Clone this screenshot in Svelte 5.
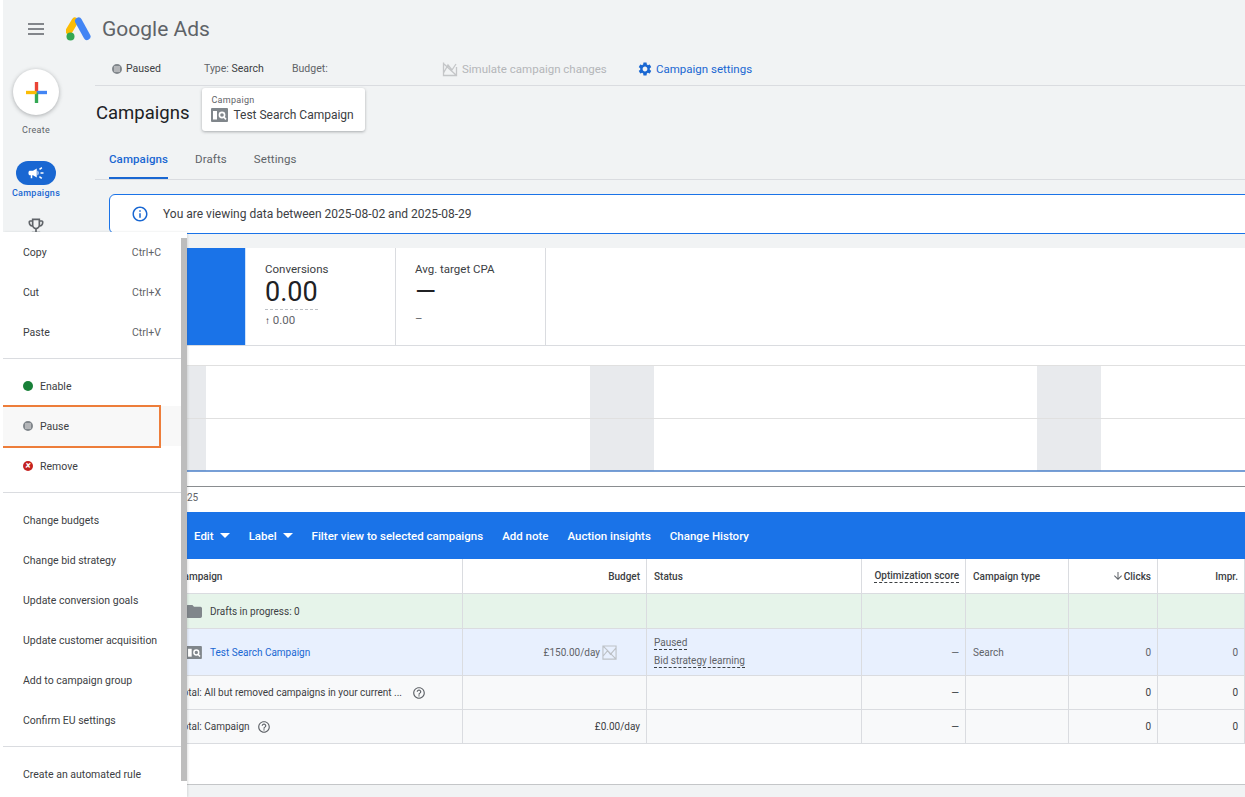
<script>
  const menuSections = [
    [{ label: 'Copy', key: 'Ctrl+C' }, { label: 'Cut', key: 'Ctrl+X' }, { label: 'Paste', key: 'Ctrl+V' }],
    [{ label: 'Enable', dot: 'enable' }, { label: 'Pause', dot: 'pause' }, { label: 'Remove', dot: 'remove' }],
    [{ label: 'Change budgets' }, { label: 'Change bid strategy' }, { label: 'Update conversion goals' }, { label: 'Update customer acquisition' }, { label: 'Add to campaign group' }, { label: 'Confirm EU settings' }],
    [{ label: 'Create an automated rule' }]
  ];
</script>

<div class="page">
  <header class="topbar">
    <svg class="burger" viewBox="0 0 16 12"><path d="M0 1h16M0 6h16M0 11h16" stroke="#5f6368" stroke-width="1.6" /></svg>
    <svg class="logo" viewBox="0 0 25 24">
      <path d="M9 4 L3 14" stroke="#fbbc04" stroke-width="7" stroke-linecap="round" />
      <path d="M12.5 4 L21 19.5" stroke="#4285f4" stroke-width="7" stroke-linecap="round" />
      <circle cx="4.5" cy="19.5" r="4" fill="#34a853" />
    </svg>
    <span class="brand">Google Ads</span>
  </header>

  <div class="body">
    <nav class="side">
      <div class="create">
        <svg viewBox="0 0 20 20" width="21" height="21">
          <rect x="8.4" y="0" width="3.2" height="10" fill="#ea4335" />
          <rect x="10" y="8.4" width="10" height="3.2" fill="#4285f4" />
          <rect x="8.4" y="10" width="3.2" height="10" fill="#34a853" />
          <rect x="0" y="8.4" width="10" height="3.2" fill="#fbbc04" />
        </svg>
      </div>
      <span class="create-label">Create</span>
      <div class="pill">
        <svg viewBox="0 0 24 24" width="18" height="18"><path fill="#fff" d="M18 11v2h4v-2h-4zm-2 6.61c.96.71 2.21 1.65 3.2 2.39.4-.53.8-1.07 1.2-1.6-.99-.74-2.24-1.68-3.2-2.4-.4.54-.8 1.08-1.2 1.61zM20.4 5.6c-.4-.53-.8-1.07-1.2-1.6-.99.74-2.24 1.68-3.2 2.4.4.53.8 1.07 1.2 1.6.96-.72 2.21-1.65 3.2-2.4zM4 9c-1.1 0-2 .9-2 2v2c0 1.1.9 2 2 2h1v4h2v-4h1l5 3V6L8 9H4zm11.5 3c0-1.33-.58-2.53-1.5-3.35v6.69c.92-.81 1.5-2.01 1.5-3.34z" /></svg>
      </div>
      <span class="pill-label">Campaigns</span>
      <svg class="trophy" viewBox="0 0 24 24" width="20" height="20"><path fill="#5f6368" d="M19 5h-2V3H7v2H5c-1.1 0-2 .9-2 2v1c0 2.55 1.92 4.63 4.39 4.94.63 1.5 1.98 2.63 3.61 2.96V19H7v2h10v-2h-4v-3.1c1.63-.33 2.98-1.46 3.61-2.96C19.08 12.63 21 10.55 21 8V7c0-1.1-.9-2-2-2zM5 8V7h2v3.82C5.84 10.4 5 9.3 5 8zm7 6c-1.65 0-3-1.35-3-3V5h6v6c0 1.65-1.35 3-3 3zm7-6c0 1.3-.84 2.4-2 2.82V7h2v1z" /></svg>
    </nav>

    <main class="main">
      <div class="status-row">
        <span class="st-paused"><i class="dot pause small"></i>Paused</span>
        <span class="st-type"><em>Type:</em> Search</span>
        <span class="st-budget"><em>Budget:</em></span>
        <span class="st-sim">
          <svg viewBox="0 0 16 16" width="16" height="16"><path d="M1.5 1.5v13h13V6M1.5 12 6 4l4 5 4-6M2 3l12 11" fill="none" stroke="#c4c6c8" stroke-width="1.3" /></svg>
          Simulate campaign changes
        </span>
        <span class="st-set">
          <svg viewBox="0 0 24 24" width="16" height="16"><path fill="#1967d2" fill-rule="evenodd" d="M19.14 12.94c.04-.3.06-.61.06-.94 0-.32-.02-.64-.07-.94l2.03-1.58c.18-.14.23-.41.12-.61l-1.92-3.32c-.12-.22-.37-.29-.59-.22l-2.39.96c-.5-.38-1.03-.7-1.62-.94l-.36-2.54c-.04-.24-.24-.41-.48-.41h-3.84c-.24 0-.43.17-.47.41l-.36 2.54c-.59.24-1.13.57-1.62.94l-2.39-.96c-.22-.08-.47 0-.59.22L2.74 8.87c-.12.21-.08.47.12.61l2.03 1.58c-.05.3-.09.63-.09.94s.02.64.07.94l-2.03 1.58c-.18.14-.23.41-.12.61l1.92 3.32c.12.22.37.29.59.22l2.39-.96c.5.38 1.03.7 1.62.94l.36 2.54c.05.24.24.41.48.41h3.84c.24 0 .44-.17.47-.41l.36-2.54c.59-.24 1.13-.56 1.62-.94l2.39.96c.22.08.47 0 .59-.22l1.92-3.32c.12-.22.07-.47-.12-.61l-2.01-1.58zM12 15.6c-1.98 0-3.6-1.62-3.6-3.6s1.62-3.6 3.6-3.6 3.6 1.62 3.6 3.6-1.62 3.6-3.6 3.6z" /></svg>
          Campaign settings
        </span>
      </div>

      <div class="title-row">
        <h1>Campaigns</h1>
        <div class="ccard">
          <span class="ccard-cap">Campaign</span>
          <span class="ccard-name">
            <svg viewBox="0 0 17 14" width="17" height="14"><use href="#camp-icon" /></svg>
            Test Search Campaign
          </span>
        </div>
      </div>

      <div class="tabs">
        <span class="tab active">Campaigns</span>
        <span class="tab">Drafts</span>
        <span class="tab">Settings</span>
      </div>

      <div class="content">
        <div class="banner">
          <svg viewBox="0 0 24 24" width="18" height="18"><path fill="#1967d2" d="M11 7h2v2h-2zm0 4h2v6h-2zm1-9C6.48 2 2 6.48 2 12s4.48 10 10 10 10-4.48 10-10S17.52 2 12 2zm0 18c-4.41 0-8-3.59-8-8s3.59-8 8-8 8 3.59 8 8-3.59 8-8 8z" /></svg>
          <span>You are viewing data between 2025-08-02 and 2025-08-29</span>
        </div>

        <section class="scores">
          <div class="score-blue"></div>
          <div class="score">
            <span class="s-name">Conversions</span>
            <span class="s-val dashed">0.00</span>
            <span class="s-sub"><b>↑</b> 0.00</span>
          </div>
          <div class="score">
            <span class="s-name">Avg. target CPA</span>
            <span class="s-val">—</span>
            <span class="s-sub">–</span>
          </div>
        </section>

        <section class="chart">
          <svg viewBox="0 0 1136 166" width="1136" height="166">
            <rect x="78" y="19" width="19" height="106" fill="#e8eaed" />
            <rect x="481" y="19" width="64" height="106" fill="#e8eaed" />
            <rect x="928" y="19" width="64" height="106" fill="#e8eaed" />
            <path d="M0 19.5h1136M0 72.5h1136" stroke="#e0e0e0" />
            <path d="M0 125h1136" stroke="#4a7fc8" stroke-width="1.5" />
            <path d="M0 140.5h1136" stroke="#8a8d90" />
            <text x="78" y="155" class="axis">25</text>
          </svg>
        </section>

        <div class="toolbar">
          <span class="t-drop">Edit <i></i></span>
          <span class="t-drop">Label <i></i></span>
          <span>Filter view to selected campaigns</span>
          <span>Add note</span>
          <span>Auction insights</span>
          <span>Change History</span>
        </div>

        <div class="table">
          <div class="row head">
            <div class="c first">Campaign</div>
            <div class="c num">Budget</div>
            <div class="c">Status</div>
            <div class="c num"><span class="dash-u">Optimization score</span></div>
            <div class="c">Campaign type</div>
            <div class="c num">
              <svg viewBox="0 0 24 24" width="12" height="12"><path fill="#5f6368" d="M20 12l-1.41-1.41L13 16.17V4h-2v12.17l-5.58-5.59L4 12l8 8 8-8z" /></svg>
              Clicks
            </div>
            <div class="c num">Impr.</div>
          </div>
          <div class="row drafts">
            <div class="c first with-icon">
              <svg viewBox="2 4 20 16" width="16" height="13"><path fill="#80868b" d="M10 4H4c-1.1 0-1.99.9-1.99 2L2 18c0 1.1.9 2 2 2h16c1.1 0 2-.9 2-2V8c0-1.1-.9-2-2-2h-8l-2-2z" /></svg>
              Drafts in progress: 0
            </div>
            <div class="c"></div><div class="c"></div><div class="c"></div><div class="c"></div><div class="c"></div><div class="c"></div>
          </div>
          <div class="row camp">
            <div class="c first with-icon">
              <svg viewBox="0 0 17 14" width="16" height="13"><use href="#camp-icon" /></svg>
              <a href="#top">Test Search Campaign</a>
            </div>
            <div class="c num budget">
              £150.00/day
              <svg viewBox="0 0 16 16" width="15" height="15"><path d="M1 1h14v14H1zM1 1l14 14M1 12 6 6l3 4 6-7" fill="none" stroke="#bdc1c6" stroke-width="1.2" /></svg>
            </div>
            <div class="c stack"><span class="dash-u">Paused</span><span class="dash-u">Bid strategy learning</span></div>
            <div class="c num">—</div>
            <div class="c">Search</div>
            <div class="c num">0</div>
            <div class="c num">0</div>
          </div>
          <div class="row total">
            <div class="c first total-name">
              <span>Total: All but removed campaigns in your current ...</span>
              <svg class="help wide" viewBox="0 0 24 24" width="14" height="14"><use href="#help-icon" /></svg>
            </div>
            <div class="c"></div><div class="c"></div>
            <div class="c num">—</div><div class="c"></div>
            <div class="c num">0</div><div class="c num">0</div>
          </div>
          <div class="row total">
            <div class="c first total-name">
              <span>Total: Campaign</span>
              <svg class="help" viewBox="0 0 24 24" width="14" height="14"><use href="#help-icon" /></svg>
            </div>
            <div class="c num">£0.00/day</div><div class="c"></div>
            <div class="c num">—</div><div class="c"></div>
            <div class="c num">0</div><div class="c num">0</div>
          </div>
          <div class="table-foot"></div>
        </div>
      </div>
    </main>
  </div>

  <aside class="menu">
    {#each menuSections as section, i}
      <ul class:last={i === menuSections.length - 1}>
        {#each section as item}
          <li class:hover={item.dot === 'pause'}>
            {#if item.dot}<i class="dot {item.dot}"></i>{/if}
            <span class="m-label">{item.label}</span>
            {#if item.key}<span class="m-key">{item.key}</span>{/if}
          </li>
        {/each}
      </ul>
    {/each}
    <div class="scrollbar"></div>
    <div class="callout"></div>
  </aside>

  <svg class="defs" width="0" height="0">
    <defs>
      <g id="camp-icon">
        <rect x="0" y="0" width="17" height="14" rx="1" fill="#80868b" />
        <rect x="2" y="3" width="4" height="8.5" fill="#fff" />
        <circle cx="11" cy="7" r="2.6" fill="none" stroke="#fff" stroke-width="1.6" />
        <path d="M12.8 9 15 11.4" stroke="#fff" stroke-width="1.6" />
      </g>
      <path id="help-icon" fill="#5f6368" d="M11 18h2v-2h-2v2zm1-16C6.48 2 2 6.48 2 12s4.48 10 10 10 10-4.48 10-10S17.52 2 12 2zm0 18c-4.41 0-8-3.59-8-8s3.59-8 8-8 8 3.59 8 8-3.59 8-8 8zm0-14c-2.21 0-4 1.79-4 4h2c0-1.1.9-2 2-2s2 .9 2 2c0 2-3 1.75-3 5h2c0-2.25 3-2.5 3-5 0-2.21-1.79-4-4-4z" />
    </defs>
  </svg>
</div>

<style>
  :global(body) { margin: 0; background: #fff; }
  .page {
    position: relative;
    width: 1242px;
    height: 797px;
    margin-left: 3px;
    overflow: hidden;
    background: #f1f3f4;
    font-family: Roboto, "Liberation Sans", sans-serif;
    color: #3c4043;
  }
  .defs { position: absolute; }
  .topbar { display: flex; align-items: center; height: 52px; padding: 6px 0 0 25px; box-sizing: border-box; }
  .burger { width: 16px; height: 12px; }
  .logo { width: 25px; height: 24px; margin-left: 22px; }
  .brand { margin-left: 11px; font-size: 21px; color: #5f6368; }

  .body { display: flex; }
  .side { width: 66px; flex: none; display: flex; flex-direction: column; align-items: center; padding-left: 0; }
  .create {
    width: 46px; height: 46px; margin-top: 17px; border-radius: 50%; background: #fff;
    display: flex; align-items: center; justify-content: center;
    box-shadow: 0 1px 4px rgba(60, 64, 67, .4);
  }
  .create-label { margin-top: 10px; font-size: 9px; letter-spacing: .3px; color: #5f6368; }
  .pill { width: 40px; height: 24px; margin-top: 26px; border-radius: 12px; background: #1967d2; display: flex; align-items: center; justify-content: center; }
  .pill-label { margin-top: 3px; font-size: 9px; font-weight: 500; letter-spacing: .3px; color: #1967d2; }
  .trophy { margin-top: 18px; }

  .main { width: 1150px; margin-left: 26px; flex: none; }
  .status-row {
    display: flex; align-items: center; height: 33px; border-bottom: 1px solid #dadce0;
    font-size: 10.5px; color: #3c4043; padding-left: 17px; padding-top: 0;
  }
  .status-row em { font-style: normal; color: #5f6368; }
  .st-paused { display: flex; align-items: center; gap: 4px; width: 92px; }
  .st-type { width: 88px; }
  .st-budget { width: 150px; }
  .st-sim { display: flex; align-items: center; gap: 4px; width: 195px; font-size: 11.5px; color: #b4b6b9; }
  .st-set { display: flex; align-items: center; gap: 3px; font-size: 11.5px; color: #1967d2; }

  .dot { display: inline-block; flex: none; width: 10px; height: 10px; border-radius: 50%; box-sizing: border-box; }
  .dot.enable { background: #188038; }
  .dot.pause { background: #80868b; border: 2.5px solid #80868b; position: relative; }
  .dot.pause::after { content: ""; position: absolute; inset: 0; background: #b4b6b9; }
  .dot.remove { background: #c5221f; position: relative; }
  .dot.remove::after { content: "×"; position: absolute; inset: 0; color: #fff; font-size: 10px; line-height: 9px; text-align: center; font-weight: 700; }

  .title-row { display: flex; height: 53px; }
  h1 { margin: 17px 0 0 1px; font-size: 18.5px; font-weight: 400; line-height: 20px; color: #202124; }
  .ccard {
    width: 163px; height: 43px; margin: 2px 0 0 13px; box-sizing: border-box; padding: 7px 9px;
    background: #fff; border-radius: 3px; box-shadow: 0 1px 3px rgba(60, 64, 67, .4);
    display: flex; flex-direction: column; gap: 3px;
  }
  .ccard-cap { font-size: 9px; letter-spacing: .3px; color: #5f6368; }
  .ccard-name { display: flex; align-items: center; gap: 5px; font-size: 12px; white-space: nowrap; }

  .tabs { display: flex; gap: 27px; height: 40px; padding-left: 14px; border-bottom: 1px solid #dadce0; box-sizing: content-box; }
  .tab { font-size: 11.5px; line-height: 40px; color: #5f6368; letter-spacing: .1px; box-sizing: border-box; height: 40px; }
  .tab.active { color: #1967d2; border-bottom: 2px solid #1967d2; font-weight: 500; }

  .content { margin-left: 14px; padding-top: 14px; }
  .banner {
    display: flex; align-items: center; gap: 14px; height: 40px; box-sizing: border-box; width: 1150px;
    padding-left: 21px; background: #fff; border: 1px solid #1a73e8; border-radius: 6px; font-size: 12px;
  }
  .scores { display: flex; height: 98px; margin-top: 14px; background: #fff; border-bottom: 1px solid #dadce0; box-sizing: border-box; }
  .score-blue { width: 136px; background: #1a73e8; border-right: 1px solid #cfe3fc; }
  .score {
    width: 150px; box-sizing: border-box; padding: 14px 0 0 19px; border-right: 1px solid #dadce0;
    display: flex; flex-direction: column; align-items: flex-start;
  }
  .s-name { font-size: 11.5px; line-height: 14px; color: #3c4043; }
  .s-val { font-size: 27px; line-height: 32px; color: #202124; }
  .s-val.dashed { border-bottom: 1px dashed #bdc1c6; padding-bottom: 1px; }
  .s-sub { font-size: 11.5px; line-height: 21px; color: #5f6368; }
  .s-sub b { color: #202124; font-size: 10px; }
  .chart { height: 166px; background: #fff; overflow: hidden; }
  .chart svg { display: block; }
  .axis { font-size: 10px; fill: #5f6368; font-family: Roboto, sans-serif; }

  .toolbar {
    display: flex; align-items: center; gap: 19px; height: 47px; padding-left: 85px; background: #1a73e8;
    color: #fff; font-size: 11.5px; font-weight: 500; white-space: nowrap;
  }
  .t-drop { display: flex; align-items: center; gap: 6px; margin-right: 0; }
  .t-drop i { width: 0; height: 0; border: 5px solid transparent; border-top-color: #fff; border-bottom: 0; }

  .table { background: #fff; border-bottom: 1px solid #c4c6c8; font-size: 10px; color: #5f6368; }
  .row { display: grid; grid-template-columns: 354px 184px 215px 104px 103px 89px 87px; border-bottom: 1px solid #dadce0; box-sizing: border-box; }
  .c { display: flex; align-items: center; box-sizing: border-box; padding: 0 6px 0 7px; border-right: 1px solid #dadce0; white-space: nowrap; min-width: 0; }
  .c.first { padding-left: 68px; }
  .c.num { justify-content: flex-end; }
  .head { height: 35px; font-weight: 500; color: #3c4043; }
  .drafts { height: 35px; background: #e6f4ea; color: #3c4043; }
  .camp { height: 47px; background: #e8f0fe; }
  .total { height: 34px; background: #f8f9fa; color: #3c4043; }
  .with-icon { gap: 8px; padding-left: 77px !important; }
  .with-icon a { color: #1967d2; text-decoration: none; }
  .dash-u { border-bottom: 1px dashed #3c4043; padding-bottom: 1px; }
  .stack { flex-direction: column; align-items: flex-start; justify-content: center; gap: 5px; }
  .budget { gap: 2px; padding-right: 29px; }
  .help { margin-left: 7px; }
  .help.wide { margin-left: 10px; }
  .table-foot { height: 40px; }

  .menu {
    position: absolute; left: 0; top: 232px; width: 184px; height: 565px;
    background: #fff; box-shadow: 1px 0 2px rgba(60, 64, 67, .15);
  }
  .menu ul { list-style: none; margin: 0; padding: 0 0 6px; border-bottom: 1px solid #dadce0; margin-right: 6px; }
  .menu ul + ul { padding-top: 7px; }
  .menu ul.last { border-bottom: 0; }
  .menu li { display: flex; align-items: center; gap: 7px; height: 40px; padding: 0 20px; font-size: 10.5px; color: #3c4043; box-sizing: border-box; }
  .menu li.hover { background: #f8f8f8; }
  .m-key { margin-left: auto; color: #5f6368; }
  .scrollbar { position: absolute; top: 6px; right: 0; width: 6px; height: 543px; background: #bdbdbd; }
  .callout { position: absolute; left: -2px; top: 173px; width: 160px; height: 43px; border: 2.5px solid #ed7d3a; box-sizing: border-box; }
</style>
